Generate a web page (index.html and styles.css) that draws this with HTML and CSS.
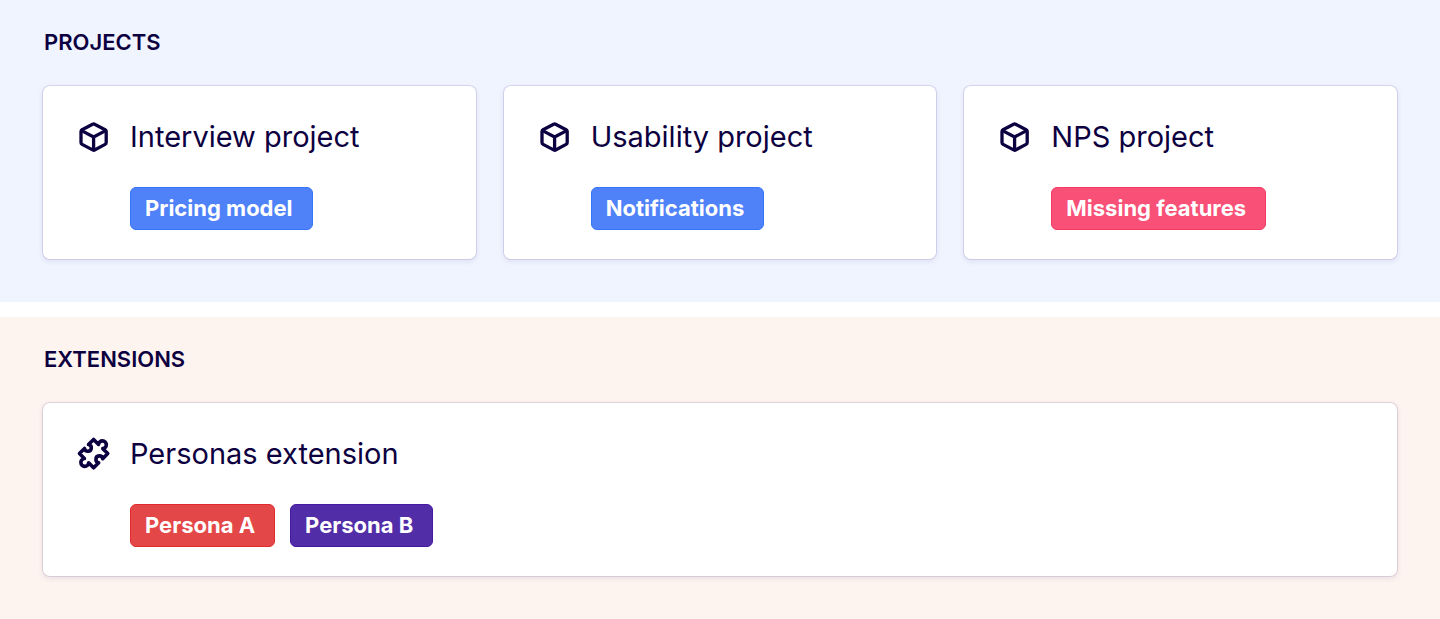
FILE: index.html
```html
<!DOCTYPE html>
<html lang="en">
<head>
<meta charset="utf-8">
<meta name="viewport" content="width=device-width, initial-scale=1">
<title>Projects and extensions</title>
<link rel="stylesheet" href="styles.css">
</head>
<body>
<svg class="sprite" aria-hidden="true">
  <symbol id="box" viewBox="0 0 36 36">
    <path d="M16.6 5.2 6.1 10.7Q5 11.4 5 12.6V23.6Q5 24.8 6.1 25.4L16.6 30.9Q17.6 31.4 18.6 30.9L29.1 25.4Q30.2 24.8 30.2 23.6V12.6Q30.2 11.4 29.1 10.7L18.6 5.2Q17.6 4.7 16.6 5.2Z"/>
    <path d="M5.6 11.6 17.6 18 29.6 11.6M17.6 18V31"/>
  </symbol>
  <symbol id="puzzle" viewBox="0 0 36 36">
    <path stroke-width="3.6" transform="rotate(45 17.6 17.6)" d="M7.6 7.6H14.6A3.9 3.9 0 1 1 20.6 7.6H27.6V14.8A3.4 3.4 0 1 0 27.6 20.4V27.6H20.6A3.9 3.9 0 1 1 14.6 27.6H7.6V20.4A3.4 3.4 0 1 0 7.6 14.8Z"/>
  </symbol>
</svg>
<main class="page">
  <section class="section section-projects">
    <h2 class="section-title">PROJECTS</h2>
    <div class="cards">
      <article class="card">
        <svg class="icon" aria-hidden="true"><use href="#box"/></svg>
        <div class="card-body">
          <h3 class="card-title">Interview project</h3>
          <div class="tags"><span class="tag tag-blue">Pricing model</span></div>
        </div>
      </article>
      <article class="card">
        <svg class="icon" aria-hidden="true"><use href="#box"/></svg>
        <div class="card-body">
          <h3 class="card-title">Usability project</h3>
          <div class="tags"><span class="tag tag-blue">Notifications</span></div>
        </div>
      </article>
      <article class="card">
        <svg class="icon" aria-hidden="true"><use href="#box"/></svg>
        <div class="card-body">
          <h3 class="card-title">NPS project</h3>
          <div class="tags"><span class="tag tag-pink">Missing features</span></div>
        </div>
      </article>
    </div>
  </section>
  <section class="section section-extensions">
    <h2 class="section-title">EXTENSIONS</h2>
    <div class="cards">
      <article class="card">
        <svg class="icon" aria-hidden="true"><use href="#puzzle"/></svg>
        <div class="card-body">
          <h3 class="card-title">Personas extension</h3>
          <div class="tags"><span class="tag tag-red">Persona A</span><span class="tag tag-purple">Persona B</span></div>
        </div>
      </article>
    </div>
  </section>
</main>
</body>
</html>
```
FILE: styles.css
```css
* {
  box-sizing: border-box;
}

body {
  margin: 0;
  background: #fff;
  color: #0d0040;
  font-family: Inter, "Liberation Sans", sans-serif;
}

.sprite {
  display: none;
}

.page {
  display: flex;
  flex-direction: column;
  gap: 15px;
}

.section {
  padding: 27px 42px 42px;
}

.section-projects {
  background: #f0f4ff;
}

.section-extensions {
  background: #fdf3ef;
}

.section-title {
  margin: 0 2px 28px;
  font-size: 22px;
  font-weight: 600;
  line-height: 30px;
}

.cards {
  display: grid;
  grid-auto-flow: column;
  grid-auto-columns: minmax(0, 1fr);
  gap: 26px;
}

.card {
  display: flex;
  gap: 18px;
  padding: 33px 33px 29px;
  background: #fff;
  border: 1px solid rgba(60, 20, 110, 0.12);
  border-radius: 8px;
  background-clip: padding-box;
  box-shadow: 0 2px 5px rgba(40, 20, 110, 0.08);
}

.icon {
  flex: none;
  width: 36px;
  height: 36px;
  fill: none;
  stroke: currentColor;
  stroke-width: 3.3;
  stroke-linejoin: round;
  stroke-linecap: round;
}

.card-title {
  margin: 0 0 32px;
  font-size: 29px;
  font-weight: 400;
  line-height: 36px;
}

.tags {
  display: flex;
  flex-wrap: wrap;
  gap: 15px;
}

.tag {
  padding: 5px 19px 6px 14px;
  border: 1px solid;
  border-radius: 6px;
  color: #fff;
  font-size: 22px;
  font-weight: 700;
  line-height: 30px;
}

.tag-blue {
  background: #4f82f8;
  border-color: #3575f8;
}

.tag-pink {
  background: #f95077;
  border-color: #f53a66;
}

.tag-red {
  background: #e44748;
  border-color: #e02a2e;
}

.tag-purple {
  background: #512da8;
  border-color: #4519a0;
}
```
